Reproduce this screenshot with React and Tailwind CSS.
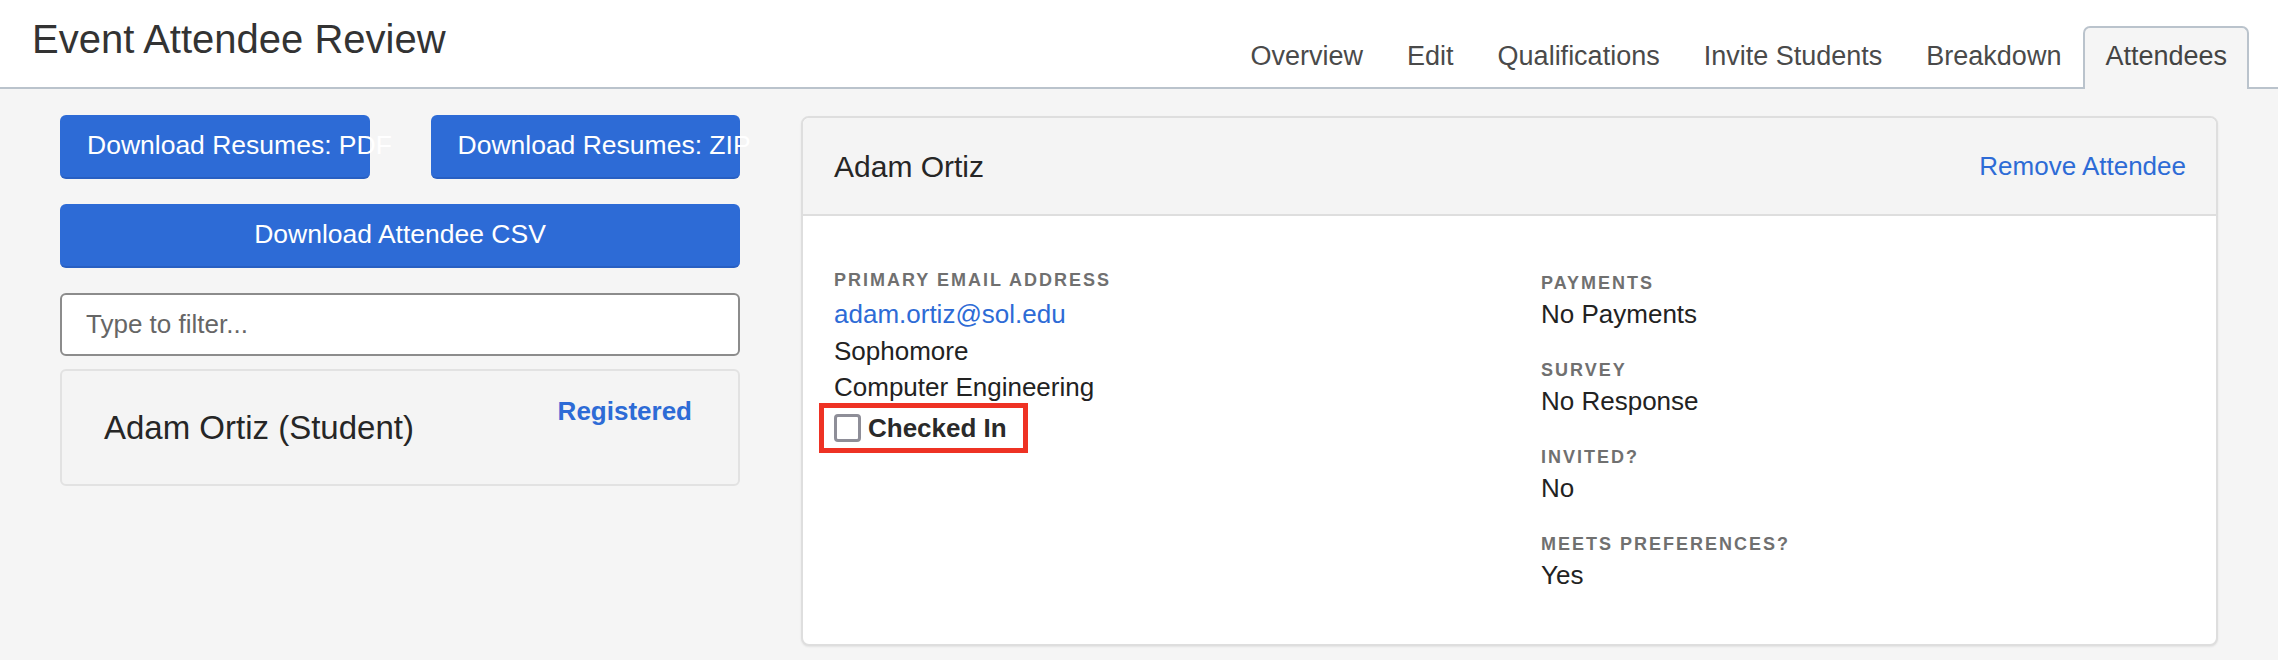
import React from 'react'

const tabs = ['Overview', 'Edit', 'Qualifications', 'Invite Students', 'Breakdown', 'Attendees']

const details = [
  { label: 'Payments', value: 'No Payments' },
  { label: 'Survey', value: 'No Response' },
  { label: 'Invited?', value: 'No' },
  { label: 'Meets Preferences?', value: 'Yes' },
]

export default function App() {
  const active = 'Attendees'

  return (
    <div className="min-h-[660px] bg-[#f5f5f5] font-['Liberation_Sans',Arial,sans-serif] text-[#222]">
      {/* page header with tabs */}
      <header className="flex h-[89px] items-stretch justify-between border-b-2 border-[#bac3cc] bg-white pr-[29px] pl-[32px]">
        <h1 className="pt-[19px] text-[40px] leading-[40px] font-normal text-[#333]">Event Attendee Review</h1>
        <nav className="flex items-end">
          {tabs.map((tab) =>
            tab === active ? (
              <div
                key={tab}
                className="-mb-[2px] h-[63px] rounded-t-[7px] border-2 border-b-0 border-[#bac3cc] bg-[#f5f5f5] px-[20px] pt-[9px] text-[27px] leading-[39px] text-[#444]"
              >
                {tab}
              </div>
            ) : (
              <button
                key={tab}
                className="flex h-[61px] items-start border-2 border-transparent px-[20px] pt-[9px] text-[27px] leading-[39px] text-[#4a4a4a]"
              >
                {tab}
              </button>
            )
          )}
        </nav>
      </header>

      <main className="flex items-start gap-[61px] px-[60px] pt-[26px]">
        {/* left column */}
        <div className="flex w-[680px] shrink-0 flex-col">
          <div className="grid grid-cols-2 gap-x-[61px]">
            <button className="flex h-[64px] items-center overflow-visible whitespace-nowrap rounded-[6px] border-b-2 border-[#285fc2] bg-[#2d6bd6] pl-[27px] text-[26.5px] text-white">
              Download Resumes: PDF
            </button>
            <button className="flex h-[64px] items-center overflow-visible whitespace-nowrap rounded-[6px] border-b-2 border-[#285fc2] bg-[#2d6bd6] pl-[27px] text-[26.5px] text-white">
              Download Resumes: ZIP
            </button>
          </div>
          <button className="mt-[25px] flex h-[64px] items-center justify-center rounded-[6px] border-b-2 border-[#285fc2] bg-[#2d6bd6] text-[26.5px] text-white">
            Download Attendee CSV
          </button>
          <input
            placeholder="Type to filter..."
            className="mt-[25px] h-[63px] rounded-[6px] border-2 border-[#8c8c8c] bg-white pl-[24px] text-[26px] text-[#222] placeholder:text-[#666] focus:outline-none"
          />
          <div className="mt-[13px] flex h-[117px] justify-between rounded-[6px] border-2 border-[#e2e2e2] bg-[#f4f4f4] pr-[46px] pl-[42px]">
            <div className="pt-[37px] text-[33px] leading-[40px] text-[#262626]">Adam Ortiz (Student)</div>
            <a className="pt-[24px] text-[26px] leading-[32px] font-bold text-[#2d6bd6]">Registered</a>
          </div>
        </div>

        {/* attendee detail card */}
        <section className="mt-px flex-1 overflow-hidden rounded-[8px] border-2 border-[#dedede] bg-white shadow-[0_1px_2px_rgba(0,0,0,0.08)]">
          <div className="flex h-[98px] items-center justify-between border-b-2 border-[#dedede] bg-[#f4f4f4] pr-[30px] pl-[31px]">
            <h2 className="text-[30px] font-normal text-[#262626]">Adam Ortiz</h2>
            <a className="text-[26px] text-[#2d6bd6]">Remove Attendee</a>
          </div>
          <div className="grid grid-cols-[707px_1fr] px-[31px] pt-[53px] pb-[51px]">
            <div className="flex flex-col items-start">
              <div className="text-[18px] leading-[22px] font-bold tracking-[2px] text-[#707070] uppercase">
                Primary Email Address
              </div>
              <a className="mt-[5px] text-[26px] leading-[36.5px] text-[#2d6bd6]">adam.ortiz@sol.edu</a>
              <div className="text-[26px] leading-[36.5px]">Sophomore</div>
              <div className="text-[26px] leading-[36.5px]">Computer Engineering</div>
              <label className="-mt-[3px] -ml-[15px] flex h-[50px] w-[209px] items-center gap-[7px] border-[5px] border-[#ee3224] pl-[10px]">
                <input
                  type="checkbox"
                  className="h-[28px] w-[27px] appearance-none rounded-[4px] border-[3px] border-[#8e8e98] bg-white"
                />
                <span className="text-[26px] leading-[32px] font-bold text-[#2a2a2a]">Checked In</span>
              </label>
            </div>
            <div className="flex flex-col gap-[27px] pt-[3px]">
              {details.map((d) => (
                <div key={d.label}>
                  <div className="mb-[2px] text-[18px] leading-[22px] font-bold tracking-[2px] text-[#707070] uppercase">
                    {d.label}
                  </div>
                  <div className="text-[26px] leading-[36px]">{d.value}</div>
                </div>
              ))}
            </div>
          </div>
        </section>
      </main>
    </div>
  )
}
